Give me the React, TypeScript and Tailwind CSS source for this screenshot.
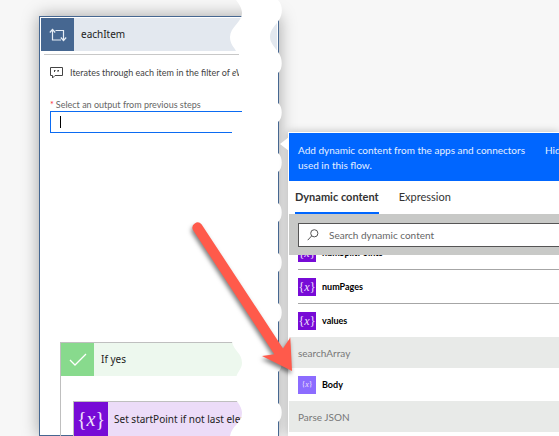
import { useState } from 'react'
import clsx from 'clsx'

type Item =
  | { kind: 'variable' | 'output'; name: string; divider?: boolean }
  | { kind: 'group'; name: string }

const items: Item[] = [
  { kind: 'variable', name: 'numSplitPoints', divider: true },
  { kind: 'variable', name: 'numPages', divider: true },
  { kind: 'variable', name: 'values' },
  { kind: 'group', name: 'searchArray' },
  { kind: 'output', name: 'Body' },
  { kind: 'group', name: 'Parse JSON' },
]

const tabs = ['Dynamic content', 'Expression']

function LoopIcon() {
  return (
    <svg width="18" height="14" viewBox="0 0 18 14" fill="none" stroke="#e6edf5" strokeWidth="1.2">
      <path d="M3.500 1.500V12h8.500" />
      <path d="M.8 4.500 3.500 1.500 6.200 4.500" />
      <path d="M6.500 2.500h8V12.500" />
      <path d="M11.800 9.500l2.700 3 2.700-3" />
    </svg>
  )
}

function CommentIcon() {
  return (
    <svg className="shrink-0" width="13" height="12" viewBox="0 0 13 12" fill="none" stroke="#444" strokeWidth="1">
      <path d="M.5.5h12v8H5L2.500 11V8.500h-2z" />
      <path d="M4 3.500h1.500M4.500 3.500v1.500M7.500 3.500H9M8 3.500v1.500" />
    </svg>
  )
}

function SearchIcon() {
  return (
    <svg className="shrink-0" width="12" height="12" viewBox="0 0 12 12" fill="none" stroke="#555" strokeWidth="1">
      <circle cx="7.300" cy="4.300" r="3.600" />
      <path d="M4.700 6.900.700 11.200" />
    </svg>
  )
}

// Paper-tear strip that hides the right side of the step card
function TornEdge() {
  return (
    <svg
      className="pointer-events-none absolute -top-[17px] left-[189px] z-10"
      width="54"
      height="436"
      viewBox="229 0 54 436"
      fill="#fff"
    >
      <path d="M236 0C239 4 242 8 242 13C242 22 230 27 230 37C230 44 234 47 236 51L239 54V109H242V112L232 130V342C234 351 242 353 242 363C242 369 237 372 236 378V400C239 404 242 408 242 413C242 423 232 425 230 436H278V422C283 418 283 407 278 403V372C283 368 283 357 278 353V322C283 318 283 307 278 303V272C283 268 283 257 278 253V222C283 218 283 207 278 203V172C283 168 283 157 278 153V122C283 118 283 107 278 103V73C283 69 283 58 278 52C275 47 270 43 270 37C270 29 276 25 279 20C283 14 283 5 278 0Z" />
    </svg>
  )
}

function Arrow() {
  return (
    <svg
      className="pointer-events-none absolute left-[180px] top-[210px] z-30 drop-shadow-[-1px_3px_2px_rgba(0,0,0,0.5)]"
      width="120"
      height="170"
      viewBox="180 210 120 170"
      fill="#ff5a4b"
    >
      <path d="M201.500 224.200 283 348.500 290.300 337.500 292 371 262 356 274.300 354.200 193 230A5.200 5.200 0 0 1 201.500 224.200Z" />
    </svg>
  )
}

function Fx({ className }: { className?: string }) {
  return (
    <span
      aria-hidden="true"
      className={clsx(
        'flex shrink-0 items-center justify-center font-["Liberation_Serif",serif] font-normal text-[#f0e2fc]',
        className,
      )}
    >
      {'{'}
      <i>x</i>
      {'}'}
    </span>
  )
}

function StepCard() {
  const [value, setValue] = useState('')

  return (
    <section className="relative mt-4 w-60 shrink-0 border border-[#466791] bg-white p-px shadow-[0_0_16px_rgba(0,0,0,0.35)]">
      <header className="flex h-[33px] items-center bg-[#e3e8ef]">
        <div className="flex size-[33px] items-center justify-center bg-[#466791]">
          <LoopIcon />
        </div>
        <h1 className='ml-[7px] font-["Noto_Sans",sans-serif] text-[10px] text-[#222]'>eachItem</h1>
      </header>
      <hr className="ml-[3px] mt-[3px] border-[#c8c8c8]" />
      <div className="mt-2 flex h-5 items-center gap-[7px] overflow-hidden whitespace-nowrap pl-[9px] text-[9px] text-[#444]">
        <CommentIcon />
        <p>
          Iterates through each item in the filter of <i>eV</i>
        </p>
      </div>
      <div className="ml-[9px] mt-4">
        <label htmlFor="source" className="flex h-3 items-center text-[9px] text-[#666]">
          <span className="mr-[2px] text-red-500">*</span>
          Select an output from previous steps
        </label>
        <div className="flex h-[22px] items-center border border-[#0b6bf2] pl-[9px]">
          <span className="h-3 w-px bg-black" />
          <input
            id="source"
            value={value}
            onChange={(e) => setValue(e.target.value)}
            className="min-w-0 flex-1 text-[10px] outline-none"
          />
        </div>
      </div>
      <div className="ml-[19px] mt-[209px] h-[200px] border-l border-t border-[#bfbfbf]">
        <div className="flex h-[33px] items-center bg-[#edf8ee]">
          <div className="flex size-[33px] items-center justify-center bg-[#88da8d]">
            <svg width="18" height="13" viewBox="0 0 18 13" fill="none" stroke="#fff" strokeWidth="1.300">
              <path d="M1 7l5 5L17 1" />
            </svg>
          </div>
          <h2 className='ml-[7px] font-["Noto_Sans",sans-serif] text-[10px] text-[#222]'>If yes</h2>
        </div>
        <div className="ml-3 mt-[25px] border-l border-t border-[#bfbfbf]">
          <div className="flex h-[34px] items-center overflow-hidden whitespace-nowrap bg-[#ecdcf8]">
            <Fx className="size-[34px] bg-[#770bd6] text-[20px]" />
            <h3 className='ml-[6px] font-["Noto_Sans",sans-serif] text-[10px] text-[#222]'>
              Set startPoint if not last element
            </h3>
          </div>
        </div>
      </div>
      <TornEdge />
    </section>
  )
}

function ContentPanel() {
  const [tab, setTab] = useState(tabs[0])
  const [query, setQuery] = useState('')

  return (
    <aside className="relative z-20 ml-[9px] mt-[132px] min-w-0 flex-1 border-l border-t border-white bg-white shadow-[0_0_8px_rgba(0,0,0,0.25)]">
      <svg className="absolute -left-[9px] top-1" width="9" height="14" viewBox="0 0 9 14" fill="#fff">
        <path d="M9 0v14L0 7z" />
      </svg>
      <div className="flex h-12 items-start gap-5 overflow-hidden whitespace-nowrap bg-[#0066ff] pl-[9px] pt-[10px] text-[10px] leading-[15px] text-[#e6f0ff]">
        <p className="shrink-0">
          Add dynamic content from the apps and connectors
          <br />
          used in this flow.
        </p>
        <button className="shrink-0">Hide</button>
      </div>
      <div className="flex h-[33px] gap-5 pl-[6px] text-[11px] text-[#333]">
        {tabs.map((t) => (
          <button
            key={t}
            onClick={() => setTab(t)}
            className={clsx('border-b-2 pt-[2px]', t === tab ? 'border-[#0066ff] font-bold' : 'border-transparent')}
          >
            {t}
          </button>
        ))}
      </div>
      <div className="relative bg-[#c8c9c7] pb-2 pl-[9px] pt-[9px]">
        <label className="flex h-6 items-center gap-[10px] border border-r-0 border-[#555] bg-white pl-2">
          <SearchIcon />
          <input
            type="search"
            placeholder="Search dynamic content"
            aria-label="Search dynamic content"
            value={query}
            onChange={(e) => setQuery(e.target.value)}
            className="min-w-0 flex-1 text-[10px] outline-none placeholder:text-[#666]"
          />
        </label>
      </div>
      <div className="overflow-hidden">
        <ul className="-mt-[19px]">
          {items.map((item) =>
            item.kind === 'group' ? (
              <li key={item.name} className="flex h-[31px] items-center bg-[#e8eae8] pl-[9px] pt-[2px] text-[10px] text-[#777]">
                {item.name}
              </li>
            ) : (
              <li key={item.name} className="pl-[9px]">
                <button
                  className={clsx(
                    'flex w-full items-center gap-[6px] text-[9px] font-bold text-black',
                    item.divider ? 'h-[34px] border-b border-[#a6a6a6]' : 'h-[33px]',
                  )}
                >
                  {item.kind === 'variable' ? (
                    <Fx className="size-[18px] bg-[#770bd6] text-[12px]" />
                  ) : (
                    <Fx className="size-[18px] bg-[#8c6cff] text-[8px]" />
                  )}
                  {item.name}
                </button>
              </li>
            ),
          )}
        </ul>
      </div>
    </aside>
  )
}

export default function App() {
  return (
    <main className='relative flex h-screen overflow-hidden bg-[#f7f7f7] pl-[39px] font-["Lato",sans-serif]'>
      <StepCard />
      <ContentPanel />
      <Arrow />
    </main>
  )
}
